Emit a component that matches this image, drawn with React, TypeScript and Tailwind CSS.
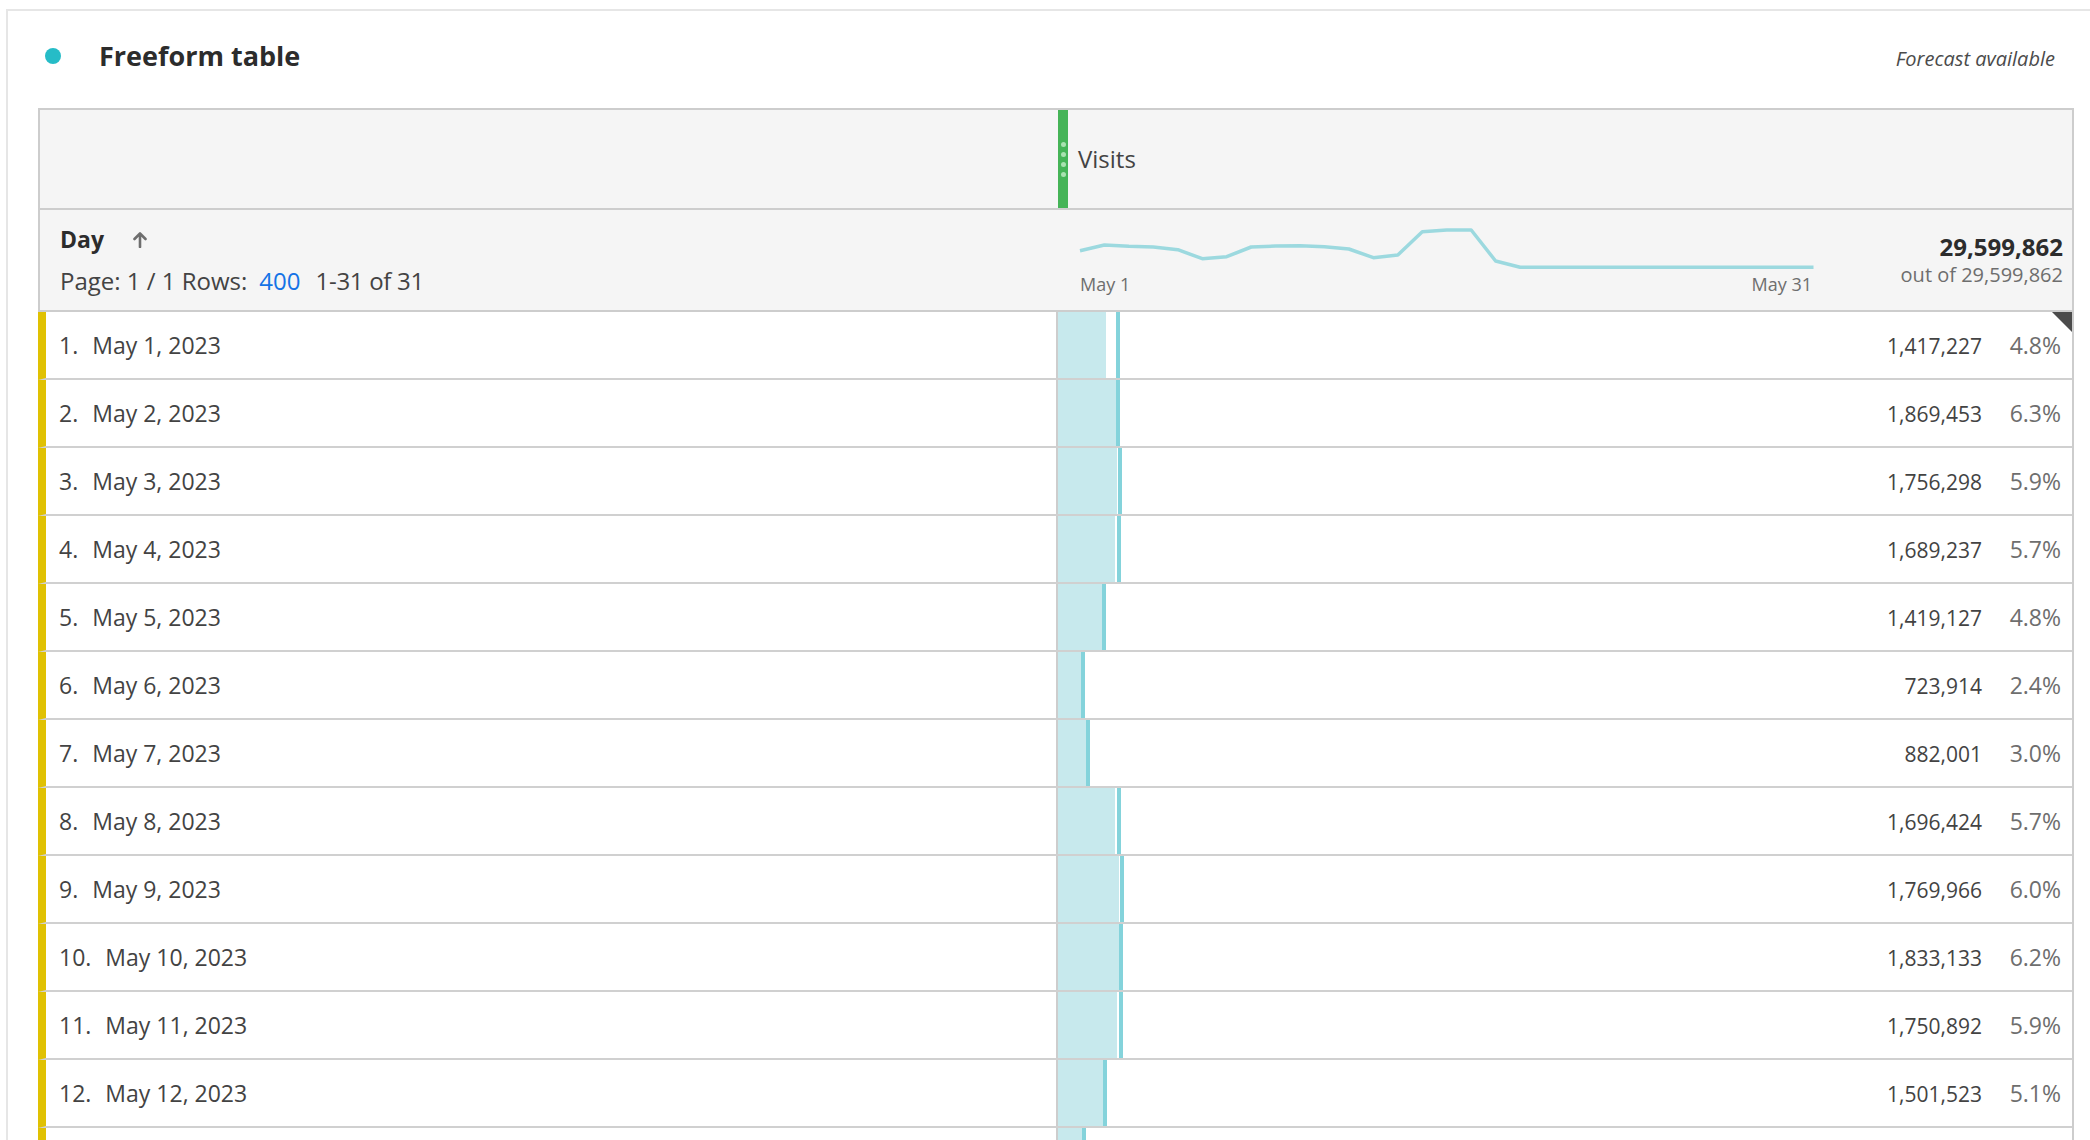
import React from "react"

const rows = [
  { n: 1, d: "May 1, 2023", v: "1,417,227", p: "4.8%", fill: 48, line: 58 },
  { n: 2, d: "May 2, 2023", v: "1,869,453", p: "6.3%", fill: 58, line: 58 },
  { n: 3, d: "May 3, 2023", v: "1,756,298", p: "5.9%", fill: 59, line: 60 },
  { n: 4, d: "May 4, 2023", v: "1,689,237", p: "5.7%", fill: 57, line: 59 },
  { n: 5, d: "May 5, 2023", v: "1,419,127", p: "4.8%", fill: 44, line: 44 },
  { n: 6, d: "May 6, 2023", v: "723,914", p: "2.4%", fill: 23, line: 23 },
  { n: 7, d: "May 7, 2023", v: "882,001", p: "3.0%", fill: 28, line: 28 },
  { n: 8, d: "May 8, 2023", v: "1,696,424", p: "5.7%", fill: 57, line: 59 },
  { n: 9, d: "May 9, 2023", v: "1,769,966", p: "6.0%", fill: 61, line: 62 },
  { n: 10, d: "May 10, 2023", v: "1,833,133", p: "6.2%", fill: 61, line: 61 },
  { n: 11, d: "May 11, 2023", v: "1,750,892", p: "5.9%", fill: 59, line: 61 },
  { n: 12, d: "May 12, 2023", v: "1,501,523", p: "5.1%", fill: 45, line: 45 },
  { n: 13, d: "May 13, 2023", v: "736,412", p: "2.5%", fill: 24, line: 24 },
]

// sparkline y offsets, one per day
const spark = [
  25.7, 20, 21.3, 22, 24.7, 33.7, 31.7, 22, 21, 20.7, 21.7, 24, 32.7, 30, 6.7, 5, 5, 36, 42.3,
  42.3, 42.3, 42.3, 42.3, 42.3, 42.3, 42.3, 42.3, 42.3, 42.3, 42.3, 42.3,
]

function Sparkline() {
  const pts = spark.map((y, i) => `${(2 + i * 24.45).toFixed(1)},${y}`).join(" ")
  return (
    <svg width="740" height="46" viewBox="0 0 740 46" className="block">
      <polyline points={pts} fill="none" stroke="#9cd9df" strokeWidth="3.5" strokeLinejoin="round" />
    </svg>
  )
}

function SortArrow() {
  return (
    <svg width="16" height="17" viewBox="0 0 16 17" className="block">
      <path d="M8 16V2.5M2.5 8 8 2.5 13.5 8" fill="none" stroke="#6e6e6e" strokeWidth="2.6" strokeLinecap="round" strokeLinejoin="round" />
    </svg>
  )
}

function Row({ r, first }: { r: (typeof rows)[number]; first: boolean }) {
  return (
    <div className="flex h-[68px] shrink-0 border-b-2 border-b-[#d0d0d0] border-l-8 border-l-[#e0c102]">
      <div className="flex w-[1010px] items-center pl-[13px] text-[23px] text-[#434343]">
        <span className="mr-[14px]">{r.n}.</span>
        <span>{r.d}</span>
      </div>
      <div className="relative flex flex-1 items-stretch border-l-2 border-[#cdcdcd]">
        <div className="flex">
          <div className="bg-[#c7e9ed]" style={{ width: r.fill }} />
          <div style={{ width: r.line - r.fill }} />
          <div className="w-[4px] bg-[#84d3db]" />
        </div>
        <div className="flex flex-1 items-center justify-end pr-[11px]">
          <div className="flex items-baseline">
            <span className="mr-[21px] text-[21px] text-[#434343]">{r.v}</span>
            <span className="w-[58px] text-right text-[23px] text-[#6e6e6e]">{r.p}</span>
          </div>
        </div>
        {first && (
          <svg width="20" height="20" viewBox="0 0 20 20" className="absolute right-0 top-0">
            <polygon points="0,0 20,0 20,20" fill="#4b4b4b" />
          </svg>
        )}
      </div>
    </div>
  )
}

export default function App() {
  return (
    <div className="h-[1140px] w-full overflow-hidden bg-white font-['Open_Sans',sans-serif]">
      <div className="ml-[6px] mt-[9px] h-[1200px] border-l-2 border-t-2 border-[#e6e6e6]">
        <div className="flex h-[90px] items-center pr-[35px]">
          <div className="ml-[37px] h-[16px] w-[16px] rounded-full bg-[#26bcc7]" />
          <h2 className="ml-[38px] text-[27px] font-bold text-[#2c2c2c]">Freeform table</h2>
          <span className="ml-auto pt-[6px] text-[20px] italic text-[#4b4b4b]">Forecast available</span>
        </div>

        <div className="ml-[30px] mr-[16px] mt-[7px] flex flex-col border-r-2 border-t-2 border-[#cdcdcd]">
          {/* metric header */}
          <div className="flex h-[100px] border-b-2 border-l-2 border-[#cdcdcd] bg-[#f5f5f5]">
            <div className="w-[1018px]" />
            <div className="flex w-[10px] flex-col items-center justify-center gap-[5px] bg-[#45b457]">
              <span className="h-[5px] w-[5px] rounded-full bg-[#a9e2b0]" />
              <span className="h-[5px] w-[5px] rounded-full bg-[#a9e2b0]" />
              <span className="h-[5px] w-[5px] rounded-full bg-[#a9e2b0]" />
              <span className="h-[5px] w-[5px] rounded-full bg-[#a9e2b0]" />
            </div>
            <div className="flex items-center pl-[10px] text-[24px] text-[#434343]">Visits</div>
          </div>

          {/* dimension header */}
          <div className="flex h-[102px] border-b-2 border-l-2 border-[#cdcdcd] bg-[#f5f5f5]">
            <div className="flex w-[1016px] flex-col justify-center gap-[11px] pl-[20px] text-[#434343]">
              <div className="flex h-[30px] items-center">
                <span className="text-[23px] font-bold text-[#2c2c2c]">Day</span>
                <span className="ml-[28px]">
                  <SortArrow />
                </span>
              </div>
              <div className="flex h-[30px] items-center text-[24px]">
                <span>Page: 1 / 1 Rows:</span>
                <span className="ml-[12px] text-[#1473e6]">400</span>
                <span className="ml-[15px] tracking-[-0.3px]">1-31 of 31</span>
              </div>
            </div>
            <div className="flex flex-1 items-start">
              <div className="ml-[22px] w-[740px] pt-[15px]">
                <Sparkline />
                <div className="mt-[1px] flex h-[24px] items-center justify-between pl-[2px] pr-[6px] text-[18px] text-[#6e6e6e]">
                  <span>May 1</span>
                  <span>May 31</span>
                </div>
              </div>
              <div className="flex flex-1 flex-col items-end pr-[9px] pt-[22px]">
                <span className="text-[24px] font-bold leading-[30px] text-[#2c2c2c]">29,599,862</span>
                <span className="text-[20px] leading-[26px] text-[#6e6e6e]">out of 29,599,862</span>
              </div>
            </div>
          </div>

          {rows.map((r, i) => (
            <Row key={r.n} r={r} first={i === 0} />
          ))}
        </div>
      </div>
    </div>
  )
}
